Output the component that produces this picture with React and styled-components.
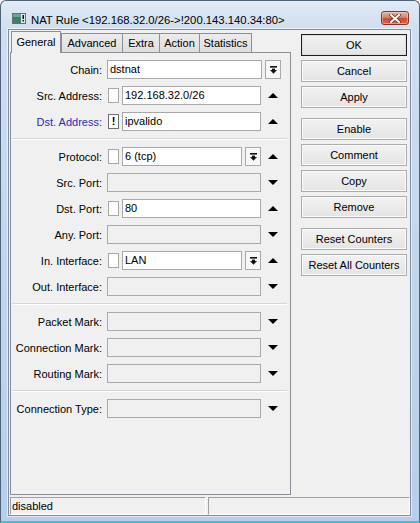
import React from 'react';
import styled, { createGlobalStyle } from 'styled-components';

const Global = createGlobalStyle`
  html, body { margin: 0; padding: 0; background: #ffffff; }
  body { font-family: "Liberation Sans", Arial, sans-serif; }
  #root { width: 420px; height: 523px; }
`;

const Window = styled.div`
  box-sizing: border-box;
  width: 420px;
  height: 523px;
  display: flex;
  flex-direction: column;
  border: 1px solid #4f6378;
  border-bottom: 2px solid #3fc2da;
  border-radius: 6px 6px 0 0;
  background: linear-gradient(to bottom, #e2ebf6 0px, #d0deef 28px, #c2d6ec 50%, #b6cfea 100%);
  padding: 0 8px 5px 7px;
  font-family: "Liberation Sans", Arial, sans-serif;
  color: #000;
`;

const TitleBar = styled.div`
  box-sizing: border-box;
  height: 28px;
  padding-top: 6px;
  display: flex;
  align-items: center;
`;

const AppIcon = styled.svg`
  margin-left: 4px;
  flex-shrink: 0;
`;

const Title = styled.div`
  margin-left: 5px;
  margin-top: 3px;
  font-size: 11.3px;
  white-space: nowrap;
`;

const CloseBtn = styled.div`
  box-sizing: border-box;
  margin-left: auto;
  margin-right: 2px;
  width: 28px;
  height: 14px;
  border: 1px solid #83372a;
  border-radius: 3px;
  background: linear-gradient(to bottom, #eab3a5 0%, #d8806b 45%, #c44d35 55%, #d2694f 100%);
  box-shadow: inset 0 0 0 1px rgba(255, 220, 210, 0.45);
  display: flex;
  align-items: center;
  justify-content: center;
`;

const Client = styled.div`
  flex: 1;
  display: flex;
  flex-direction: column;
  border: 1px solid #7c8ea5;
  background: #f0f0f0;
  box-shadow: 0 0 0 1px rgba(255, 255, 255, 0.55);
`;

const Main = styled.div`
  flex: 1;
  display: flex;
  gap: 10px;
  padding: 1px 0 0 1px;
`;

const TabsColumn = styled.div`
  width: 281px;
  display: flex;
  flex-direction: column;
`;

const TabStrip = styled.div`
  height: 21px;
  display: flex;
  align-items: flex-end;
  padding-left: 1px;
  position: relative;
  z-index: 1;
`;

const Tab = styled.div`
  box-sizing: border-box;
  width: ${(p) => p.$w}px;
  height: ${(p) => (p.$active ? 22 : 19)}px;
  margin-bottom: ${(p) => (p.$active ? -1 : 0)}px;
  border: 1px solid #8c8f96;
  border-bottom: none;
  border-right: ${(p) => (p.$active || p.$last ? '1px solid #8c8f96' : 'none')};
  background: ${(p) => (p.$active ? '#f0f0f0' : 'linear-gradient(to bottom, #ececec, #dedede)')};
  font-size: 11px;
  text-align: center;
  line-height: ${(p) => (p.$active ? 20 : 18)}px;
  white-space: nowrap;
`;

const Panel = styled.div`
  flex: 1;
  box-sizing: border-box;
  border: 1px solid #8c8f96;
  background: #f0f0f0;
  padding: 7px 9px 0 4px;
  display: flex;
  flex-direction: column;
  gap: 7px;
`;

const Row = styled.div`
  display: grid;
  grid-template-columns: 87px 174px;
  column-gap: 5px;
  height: 19px;
  align-items: center;
`;

const Label = styled.div`
  text-align: right;
  font-size: 11px;
  white-space: nowrap;
  color: ${(p) => p.$color || '#000'};
`;

const Field = styled.div`
  display: flex;
  align-items: center;
  height: 19px;
  gap: 3px;
`;

const MainField = styled.div`
  width: 157px;
  display: flex;
  align-items: center;
  gap: 3px;
  height: 19px;
`;

const Check = styled.div`
  box-sizing: border-box;
  width: 11px;
  height: 15px;
  margin-left: 1px;
  flex-shrink: 0;
  border: 1px solid ${(p) => (p.$mark ? '#6f6f6f' : '#a8a8a8')};
  background: #fff;
  font-size: 11px;
  font-weight: bold;
  line-height: 13px;
  text-align: center;
`;

const Input = styled.div`
  flex: 1;
  min-width: 0;
  box-sizing: border-box;
  height: 19px;
  border: 1px solid #a9a9a9;
  background: ${(p) => (p.$empty ? '#f0f0f0' : '#ffffff')};
  padding-left: 2px;
  font-size: 11px;
  line-height: 17px;
  white-space: nowrap;
  overflow: hidden;
`;

const DropBtn = styled.div`
  box-sizing: border-box;
  width: 16px;
  height: 19px;
  flex-shrink: 0;
  border: 1px solid #a9a9a9;
  background: #f7f7f7;
  display: flex;
  align-items: center;
  justify-content: center;
`;

const ArrowCol = styled.div`
  box-sizing: border-box;
  width: 17px;
  padding-left: 1px;
  display: flex;
  justify-content: center;
  align-items: center;
`;

const Separator = styled.div`
  height: 0;
  border-top: 1px solid #d5d5d5;
  border-bottom: 1px solid #ffffff;
  margin: 0 -6px 0 -3px;
`;

const ButtonColumn = styled.div`
  width: 106px;
  margin-top: 3px;
  display: flex;
  flex-direction: column;
  gap: 10px;
`;

const ButtonGroup = styled.div`
  display: flex;
  flex-direction: column;
  gap: 4px;
`;

const Button = styled.div`
  box-sizing: border-box;
  height: 22px;
  border: 1px solid ${(p) => (p.$default ? '#1e1e1e' : '#acacac')};
  background: linear-gradient(to bottom, #f2f2f2, #e4e4e4);
  box-shadow: inset 0 0 0 1px ${(p) => (p.$default ? '#dcdcdc' : '#fafafa')};
  font-size: 11px;
  line-height: 20px;
  text-align: center;
  white-space: nowrap;
`;

const StatusBar = styled.div`
  height: 18px;
  margin-top: 2px;
  display: flex;
  gap: 2px;
  padding-left: 1px;
`;

const StatusCell = styled.div`
  box-sizing: border-box;
  ${(p) => (p.$w ? `width: ${p.$w}px;` : 'flex: 1;')}
  border: 1px solid;
  border-color: #a0a0a0 #ffffff #ffffff #a0a0a0;
  font-size: 11px;
  line-height: 16px;
  padding-left: 1px;
`;

const UpArrow = () => (
  <svg width="10" height="5" viewBox="0 0 10 5">
    <polygon points="0,5 10,5 5,0" fill="#000" />
  </svg>
);

const DownArrow = () => (
  <svg width="10" height="5" viewBox="0 0 10 5">
    <polygon points="0,0 10,0 5,5" fill="#000" />
  </svg>
);

const DropIcon = () => (
  <svg width="7" height="8" viewBox="0 0 7 8">
    <rect x="0" y="0" width="7" height="1.6" fill="#111" />
    <rect x="2" y="2.6" width="3" height="1.6" fill="#111" />
    <polygon points="0,4 7,4 3.5,7.8" fill="#111" />
  </svg>
);

const tabs = [
  { name: 'General', w: 50, active: true },
  { name: 'Advanced', w: 61 },
  { name: 'Extra', w: 37 },
  { name: 'Action', w: 40 },
  { name: 'Statistics', w: 53, last: true },
];

const ArrowRow = ({ label, color, check, mark, value, drop, up }) => (
  <Row>
    <Label $color={color}>{label}</Label>
    <Field>
      <MainField>
        {check && <Check $mark={mark}>{mark ? '!' : ''}</Check>}
        <Input $empty={!check}>{value}</Input>
        {drop && <DropBtn><DropIcon /></DropBtn>}
      </MainField>
      <ArrowCol>{up ? <UpArrow /> : <DownArrow />}</ArrowCol>
    </Field>
  </Row>
);

export default function App() {
  return (
    <>
      <Global />
      <Window>
        <TitleBar>
          <AppIcon width="14" height="11" viewBox="0 0 14 11">
            <rect x="0.5" y="0.5" width="13" height="10" fill="#e4e8ea" stroke="#6b6e70" />
            <rect x="1" y="1" width="8" height="9" fill="#3d7f6c" />
            <rect x="1" y="1" width="8" height="3" fill="#6aa593" />
            <rect x="10.5" y="2" width="1.5" height="4" fill="#111" />
            <rect x="10.5" y="7" width="1.5" height="1.5" fill="#111" />
          </AppIcon>
          <Title>NAT Rule &lt;192.168.32.0/26-&gt;!200.143.140.34:80&gt;</Title>
          <CloseBtn>
            <svg width="12" height="9" viewBox="0 0 12 9">
              <path d="M2 1 L10 8 M10 1 L2 8" stroke="#6b2a1e" strokeWidth="3.4" strokeLinecap="square" />
              <path d="M2 1 L10 8 M10 1 L2 8" stroke="#ffffff" strokeWidth="2" strokeLinecap="square" />
            </svg>
          </CloseBtn>
        </TitleBar>
        <Client>
          <Main>
            <TabsColumn>
              <TabStrip>
                {tabs.map((t) => (
                  <Tab key={t.name} $w={t.w} $active={t.active} $last={t.last}>
                    {t.name}
                  </Tab>
                ))}
              </TabStrip>
              <Panel>
                <Row>
                  <Label>Chain:</Label>
                  <Field>
                    <Input>dstnat</Input>
                    <DropBtn><DropIcon /></DropBtn>
                  </Field>
                </Row>
                <ArrowRow label="Src. Address:" check value="192.168.32.0/26" up />
                <ArrowRow label="Dst. Address:" color="#2b2bb8" check mark value="ipvalido" up />
                <Separator />
                <ArrowRow label="Protocol:" check value="6 (tcp)" drop up />
                <ArrowRow label="Src. Port:" />
                <ArrowRow label="Dst. Port:" check value="80" up />
                <ArrowRow label="Any. Port:" />
                <ArrowRow label="In. Interface:" check value="LAN" drop up />
                <ArrowRow label="Out. Interface:" />
                <Separator />
                <ArrowRow label="Packet Mark:" />
                <ArrowRow label="Connection Mark:" />
                <ArrowRow label="Routing Mark:" />
                <Separator />
                <ArrowRow label="Connection Type:" />
              </Panel>
            </TabsColumn>
            <ButtonColumn>
              <ButtonGroup>
                <Button $default>OK</Button>
                <Button>Cancel</Button>
                <Button>Apply</Button>
              </ButtonGroup>
              <ButtonGroup>
                <Button>Enable</Button>
                <Button>Comment</Button>
                <Button>Copy</Button>
                <Button>Remove</Button>
              </ButtonGroup>
              <ButtonGroup>
                <Button>Reset Counters</Button>
                <Button>Reset All Counters</Button>
              </ButtonGroup>
            </ButtonColumn>
          </Main>
          <StatusBar>
            <StatusCell $w={196}>disabled</StatusCell>
            <StatusCell />
          </StatusBar>
        </Client>
      </Window>
    </>
  );
}
